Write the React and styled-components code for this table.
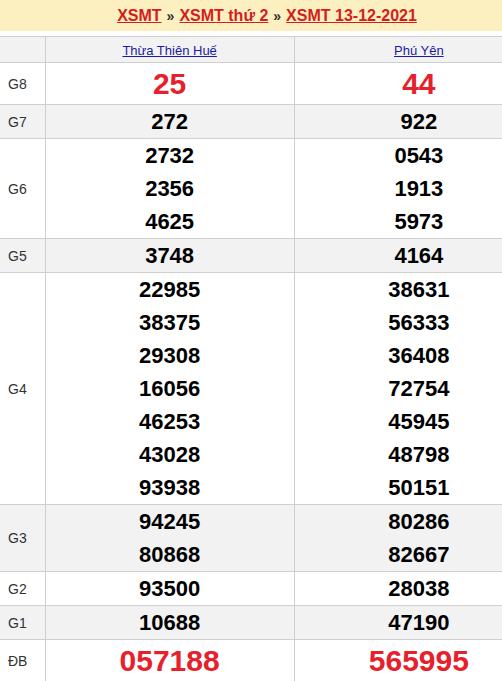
import React from "react";
import styled, { createGlobalStyle } from "styled-components";

const GlobalStyle = createGlobalStyle`
  html, body {
    margin: 0;
    padding: 0;
    background: #fff;
    overflow: hidden;
  }
  body {
    font-family: "Liberation Sans", Arial, sans-serif;
  }
`;

const provinces = ["Thừa Thiên Huế", "Phú Yên"];

const prizes = [
  { label: "G8", big: true, values: [["25"], ["44"]] },
  { label: "G7", values: [["272"], ["922"]] },
  { label: "G6", values: [["2732", "2356", "4625"], ["0543", "1913", "5973"]] },
  { label: "G5", values: [["3748"], ["4164"]] },
  {
    label: "G4",
    values: [
      ["22985", "38375", "29308", "16056", "46253", "43028", "93938"],
      ["38631", "56333", "36408", "72754", "45945", "48798", "50151"],
    ],
  },
  { label: "G3", values: [["94245", "80868"], ["80286", "82667"]] },
  { label: "G2", values: [["93500"], ["28038"]] },
  { label: "G1", values: [["10688"], ["47190"]] },
  { label: "ĐB", big: true, values: [["057188"], ["565995"]] },
];

function App() {
  return (
    <>
      <GlobalStyle />
      <Viewport>
        <Page>
          <TitleBar>
            <TitleLink href="#">XSMT</TitleLink>
            <Sep>»</Sep>
            <TitleLink href="#">XSMT thứ 2</TitleLink>
            <Sep>»</Sep>
            <TitleLink href="#">XSMT 13-12-2021</TitleLink>
          </TitleBar>
          <Table>
            <colgroup>
              <col style={{ width: 45 }} />
              <col />
              <col />
            </colgroup>
            <thead>
              <tr>
                <HeadCell />
                {provinces.map((p) => (
                  <HeadCell key={p}>
                    <ProvinceLink href="#">{p}</ProvinceLink>
                  </HeadCell>
                ))}
              </tr>
            </thead>
            <tbody>
              {prizes.map((row, i) => (
                <Row key={row.label} $shaded={i % 2 === 1}>
                  <LabelCell>{row.label}</LabelCell>
                  {row.values.map((col, j) => (
                    <NumberCell key={j}>
                      {col.map((n) => (
                        <Num key={n} $big={row.big}>
                          {n}
                        </Num>
                      ))}
                    </NumberCell>
                  ))}
                </Row>
              ))}
            </tbody>
          </Table>
        </Page>
      </Viewport>
    </>
  );
}

const Viewport = styled.div`
  width: 100%;
  overflow: hidden;
`;

const Page = styled.div`
  width: 544px;
`;

const TitleBar = styled.div`
  background: #fcefc0;
  height: 31px;
  display: flex;
  align-items: center;
  justify-content: center;
  gap: 5px;
  margin-bottom: 5px;
  padding-right: 10px;
`;

const TitleLink = styled.a`
  color: #d51d1d;
  font-size: 16px;
  font-weight: bold;
  text-decoration: underline;
`;

const Sep = styled.span`
  color: #333;
  font-size: 14px;
  font-weight: bold;
`;

const Table = styled.table`
  width: 544px;
  border-collapse: collapse;
  table-layout: fixed;

  td:first-child,
  th:first-child {
    border-left: none;
  }
`;

const HeadCell = styled.th`
  background: #f2f2f2;
  border: 1px solid #cfcfcf;
  height: 25px;
  padding: 0;
  font-weight: normal;
  text-align: center;
`;

const ProvinceLink = styled.a`
  color: #1b1b9e;
  font-size: 13px;
  text-decoration: underline;
`;

const Row = styled.tr`
  background: ${(p) => (p.$shaded ? "#f2f2f2" : "#fff")};
`;

const LabelCell = styled.td`
  border: 1px solid #cfcfcf;
  padding: 0 0 0 8px;
  font-size: 14px;
  color: #333;
`;

const NumberCell = styled.td`
  border: 1px solid #cfcfcf;
  padding: 0;
  text-align: center;
`;

const Num = styled.div`
  font-weight: bold;
  font-size: ${(p) => (p.$big ? "30px" : "22px")};
  line-height: ${(p) => (p.$big ? "41px" : "33px")};
  color: ${(p) => (p.$big ? "#e6212b" : "#000")};
`;

export default App;
